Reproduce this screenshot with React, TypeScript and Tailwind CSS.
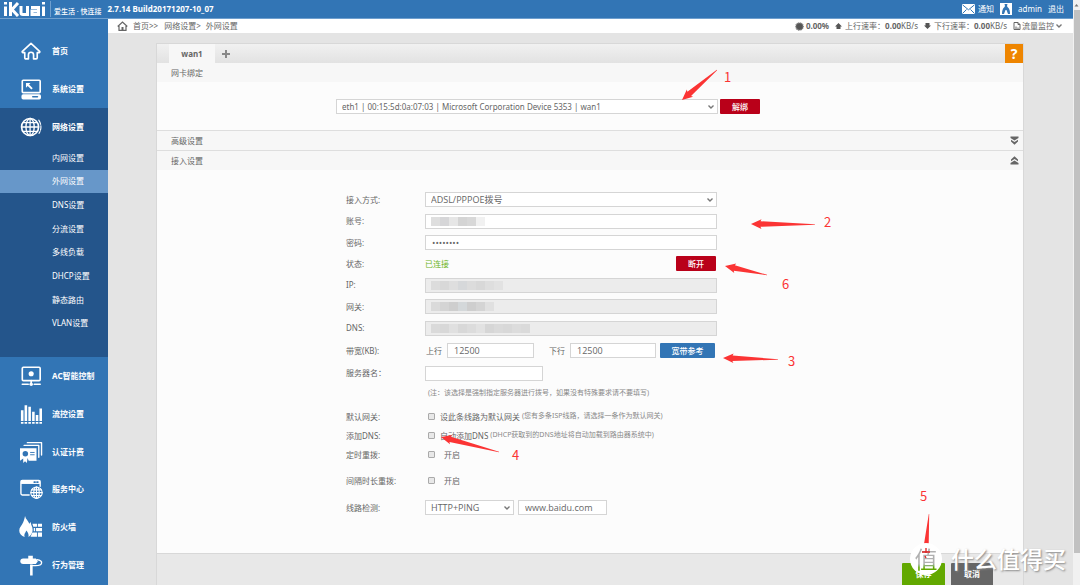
import React from "react";

type Child = { children: React.ReactNode };

/* ---------- icons ---------- */

function Svg({ children, className }: Child & { className: string }) {
  return (
    <svg viewBox="0 0 24 24" className={className} fill="none" stroke="currentColor" strokeWidth="1.8" strokeLinecap="round" strokeLinejoin="round" aria-hidden="true">
      {children}
    </svg>
  );
}

const icons = {
  home: (
    <path d="M2.6 12.4 12 3.6l9.400 8.800c.5.600.1 1.400-.6 1.400h-2v5.600c0 .8-.5 1.200-1.200 1.200h-2.800v-4.400a2.800 2.800 0 0 0-5.600 0v4.400H6.400c-.7 0-1.200-.4-1.200-1.200v-5.600h-2c-.7 0-1.100-.8-.6-1.400Z" />
  ),
  system: (
    <>
      <rect x="2.500" y="2.500" width="19.500" height="13.500" rx="1" />
      <path d="M6.500 5.500h5l-1.600 1.600 4 4-1.500 1.500-4-4-1.900 1.900Z" fill="currentColor" stroke="none" />
      <rect x="2.500" y="18.500" width="19.500" height="4" rx="1" fill="currentColor" />
      <path d="M14 20.500h5" stroke="#3275b5" />
    </>
  ),
  network: (
    <>
      <circle cx="11" cy="12" r="9.300" />
      <ellipse cx="11" cy="12" rx="4.500" ry="9.300" strokeWidth="1.500" />
      <path d="M11 2.700v18.600M1.700 12h18.600M3.200 7.300h15.600M3.200 16.700h15.600" strokeWidth="1.400" />
      <path d="M20.500 4.500c3 4.500 3.200 10 .2 14.500" strokeWidth="1.200" strokeDasharray="5 1.500" />
    </>
  ),
  ac: (
    <>
      <rect x="2.500" y="2.500" width="19.500" height="14.500" rx="1.200" />
      <circle cx="12.200" cy="9.500" r="2.800" fill="currentColor" stroke="none" />
      <path d="M12.200 17v2.500M2.500 21h6.500M15.500 21h6.500" />
      <circle cx="12.200" cy="21" r="1.900" fill="currentColor" stroke="none" />
    </>
  ),
  flow: (
    <g fill="currentColor" stroke="none">
      <path d="M1 8h2.800v11.500H1zM5 2.500h2.800v17H5zM9.100 4h2.800v15.500H9.100zM13.200 9.500H16v10h-2.800zM17.200 13H20v6.500h-2.800zM21.200 6H24v13.500h-2.800z" />
      <path d="M1 20.800h2.800v1.700H1zM5 20.800h2.800v1.700H5zM9.100 20.800h2.800v1.700H9.100zM13.200 20.800H16v1.700h-2.800zM17.200 20.800H20v1.700h-2.800zM21.200 20.800H24v1.700h-2.800z" />
    </g>
  ),
  auth: (
    <>
      <path d="M8 1.800h15.500v13.500M4.500 4.800h16v13" strokeWidth="1.500" />
      <path d="M0 8h18v13.500H9.500l-1.300-3-.7 5.500-2-2-2 2V19L0 21.500Z" fill="currentColor" stroke="none" />
      <circle cx="5.800" cy="14" r="3" fill="#3275b5" stroke="none" />
      <path d="M11.500 12.500h4M11.500 15h4" stroke="#3275b5" strokeWidth="1" />
    </>
  ),
  service: (
    <>
      <path d="M22 9V4.200c0-1-.5-1.500-1.500-1.500h-18C1.500 2.700 1 3.200 1 4.200V17c0 1 .5 1.500 1.500 1.500H10" strokeWidth="1.500" />
      <path d="M1 2.500h21v4H1z" fill="currentColor" stroke="none" />
      <path d="M15.500 4.500h1M18.500 4.500h1" stroke="#3275b5" />
      <g strokeWidth="1.200">
        <circle cx="18" cy="16" r="6.200" fill="#3275b5" />
        <ellipse cx="18" cy="16" rx="3" ry="6.200" />
        <path d="M18 9.800v12.400M11.800 16h12.400M12.800 12.900h10.400M12.800 19.100h10.400" />
      </g>
    </>
  ),
  fire: (
    <g fill="currentColor" stroke="none">
      <path d="M5.500 0c.5 3.500 4 5.600 4.700 8.500l1.600-2c-.2 3 2 5 2 8.500 0 3.200-1.500 6-4.500 7.800.5-3-.8-5.500-2.500-7-.5 2.500-2.800 3.500-1.700 7C1.500 21.500-.8 19-.8 16c0-3.300 2.100-5 3.300-7.200C4 6.200 4.800 3.500 5.500 0Z" />
      <path d="M13.500 8.500h5v3.200h-4zM19.500 8.500H24v3.200h-4.500zM15 13h1.500v3.500H15zM17.500 13H24v3.500h-6.500zM13.500 18h5v4.500h-7zM19.500 18H24v4.500h-4.500z" />
    </g>
  ),
  behavior: (
    <g>
      <path d="M3.500 5h13.800l2.200 3-2.200 3H3.500C-.8 11-.8 5 3.500 5Z" fill="currentColor" stroke="none" />
      <path d="M9 2h5v3.500H9zM11 11.500h2.800v12H11z" fill="currentColor" stroke="none" />
      <path d="M18.500 6.200c7 1 7 6.500-1.500 6.500h-5" strokeWidth="1.500" />
    </g>
  ),
};

type IconName = keyof typeof icons;

function Chevron({ className }: { className: string }) {
  return (
    <svg viewBox="0 0 8 6" className={className} fill="none" stroke="#777" strokeWidth="1.400" aria-hidden="true">
      <path d="m1.500 1.500 2.500 2.500 2.500-2.500" />
    </svg>
  );
}

/* ---------- navigation ---------- */

const topItems: { icon: IconName; label: string }[] = [
  { icon: "home", label: "首页" },
  { icon: "system", label: "系统设置" },
];
const subItems = ["内网设置", "外网设置", "DNS设置", "分流设置", "多线负载", "DHCP设置", "静态路由", "VLAN设置"];
const bottomItems: { icon: IconName; label: string }[] = [
  { icon: "ac", label: "AC智能控制" },
  { icon: "flow", label: "流控设置" },
  { icon: "auth", label: "认证计费" },
  { icon: "service", label: "服务中心" },
  { icon: "fire", label: "防火墙" },
  { icon: "behavior", label: "行为管理" },
];

function NavItem({ icon, label }: { icon: IconName; label: string }) {
  return (
    <a href="#" className="flex h-[38px] items-center gap-[10px] pl-5 text-[8px] font-bold whitespace-nowrap">
      <Svg className="size-[22px] shrink-0 overflow-visible">{icons[icon]}</Svg>
      {label}
    </a>
  );
}

function Sidebar() {
  return (
    <nav className="w-[108px] shrink-0 bg-[#3275b5] pt-[13px] text-white">
      {topItems.map((i) => <NavItem key={i.label} {...i} />)}
      <div className="bg-[#24558b] pb-[22px]">
        <NavItem icon="network" label="网络设置" />
        <div className="grid h-[189px] grid-rows-8">
          {subItems.map((s) => (
            <a key={s} href="#" className={s === "外网设置" ? "flex items-center bg-[#6797c9] pl-[52px] text-[8px]" : "flex items-center pl-[52px] text-[8px]"}>
              {s}
            </a>
          ))}
        </div>
      </div>
      <div className="grid h-[227px] grid-rows-6">
        {bottomItems.map((i) => <NavItem key={i.label} {...i} />)}
      </div>
    </nav>
  );
}

function Header() {
  return (
    <header className="flex h-[19px] items-center border-b border-[#6f9fce] bg-[#3275b5] text-[8px] text-white">
      <svg viewBox="0 0 44 16" className="ml-[3px] h-4 w-11 shrink-0" fill="none" stroke="currentColor" strokeWidth="3" role="img" aria-label="iKuai">
        <path d="M2.500 5.500V15M2.500 1v2.500M7.500 1v14M15 2l-6 6.500L15 15M18 5v6.500c0 1.500.6 2 2 2h4.500V5M28 6.500h7.500V15M35.500 10H29v3.500h6M40.500 5.500V15M40.500 1v2.500" />
      </svg>
      <span className="ml-[3px] border-l border-[#6f9fce] pt-[5px] pl-[3px] text-[7px] leading-[11px] font-medium whitespace-nowrap">爱生活 · 快连接</span>
      <span className="ml-[6px] font-bold whitespace-nowrap">2.7.14 Build20171207-10_07</span>
      <div className="ml-auto flex items-center gap-[6px] pr-[9px] whitespace-nowrap">
        <a href="#" className="flex items-center gap-[3px]">
          <svg viewBox="0 0 13 10" className="h-[10px] w-[13px]" aria-hidden="true">
            <path d="M0 0h13v10H0z" fill="#fff" />
            <path d="m.5.800 6 5 6-5M.5 9.500l4-4M12.500 9.500l-4-4" fill="none" stroke="#3275b5" strokeWidth="1" />
          </svg>
          通知
        </a>
        <a href="#" className="flex items-center gap-[6px]">
          <svg viewBox="0 0 12 12" className="size-3" aria-hidden="true">
            <path d="M0 0h12v12H0z" fill="#fff" />
            <path d="M4.500 1h3l-.5 2 .5 1c2 1.500 2.500 4 2.500 7H8L6.500 7h-1L4 11H2c0-3 .5-5.500 2.500-7L5 3Z" fill="#3275b5" />
          </svg>
          admin
        </a>
        <a href="#">退出</a>
      </div>
    </header>
  );
}

function Rate({ down, label }: { down?: boolean; label: string }) {
  return (
    <span className="flex items-center gap-[3px]">
      <svg viewBox="0 0 7 6" className="h-[6px] w-[7px]" fill="#555" aria-hidden="true">
        {down ? <path d="M1.500 0h4v2.500H7L3.500 6 0 2.500h1.500z" /> : <path d="M1.500 6h4V3.500H7L3.500 0 0 3.500h1.500z" />}
      </svg>
      <span>{label}<b>0.00</b>KB/s</span>
    </span>
  );
}

function StatusBar() {
  return (
    <div className="flex h-[14px] items-center bg-white pr-[10px] pl-[9px] text-[8px] whitespace-nowrap text-[#666]">
      <svg viewBox="0 0 11 10" className="mr-[5px] h-[10px] w-[11px]" fill="none" stroke="#666" strokeWidth="1.200" aria-hidden="true">
        <path d="M.7 5.500 5.500 1l4.800 4.500M2 5v4.300h7V5" />
        <path d="M4.500 6h2v3h-2z" fill="#666" stroke="none" />
      </svg>
      <a href="#">首页&gt;&gt;</a>
      <a href="#" className="ml-[6px]">网络设置&gt;</a>
      <span className="ml-[5px]">外网设置</span>
      <div className="ml-auto flex items-center gap-[6px]">
        <span className="flex items-center gap-[2px]">
          <svg viewBox="0 0 10 10" className="size-[9px]" aria-hidden="true">
            <circle cx="5" cy="5" r="4" fill="#555" stroke="#777" strokeWidth="1.600" strokeDasharray="1 .7" />
          </svg>
          <b>0.00%</b>
        </span>
        <Rate label="上行速率：" />
        <Rate down label="下行速率：" />
        <a href="#" className="flex items-center gap-px">
          <svg viewBox="0 0 8 8" className="size-2" fill="none" stroke="#666" aria-hidden="true">
            <path d="M1 .5h4l2 2v5H1zM5 .5v2h2M3 7V4.500M5 7V5.500" />
          </svg>
          流量监控
          <Chevron className="h-[6px] w-2" />
        </a>
      </div>
    </div>
  );
}

/* ---------- form ---------- */

function Row({ id, label, children, className }: Child & { id: string; label: string; className: string }) {
  return (
    <div className={`grid grid-cols-[79px_292px] items-center ${className}`}>
      <label htmlFor={id}>{label}</label>
      <div className="flex items-center">{children}</div>
    </div>
  );
}

const field = "h-[15px] min-w-0 border border-[#d5d5d5] px-[6px] font-['Open_Sans','Noto_Sans_CJK_SC',sans-serif] text-[9px] leading-[13px] text-[#666] outline-none";

function Select({ id, value, className, label, small }: { id: string; value: string; className: string; label?: string; small?: boolean }) {
  return (
    <span className={`relative flex ${className}`}>
      <select id={id} aria-label={label} className={`h-[15px] w-full appearance-none border border-[#d5d5d5] bg-white pl-[5px] leading-[13px] text-[#666] outline-none ${small ? "text-[8px]" : "font-['Open_Sans','Noto_Sans_CJK_SC',sans-serif] text-[9px]"}`}>
        <option>{value}</option>
      </select>
      <Chevron className="pointer-events-none absolute top-[5px] right-[3px] h-[6px] w-2" />
    </span>
  );
}

function Mosaic({ id, tiles, disabled }: { id: string; tiles: string[]; disabled?: boolean }) {
  return (
    <span className="relative flex w-full">
      <input id={id} type="text" disabled={disabled} className={`${field} w-full ${disabled ? "bg-[#ececec]" : "bg-white"}`} />
      <span className="pointer-events-none absolute top-[3px] left-[6px] flex">
        {tiles.map((t, i) => <span key={i} className={`h-[9px] w-[9px] ${t}`} />)}
      </span>
    </span>
  );
}

const box = "size-[7px] appearance-none rounded-[1px] border border-[#aaa] bg-[#e8e8e8]";
const redButton = "h-[15px] w-10 rounded-[1px] bg-[#b90019] text-[8px] leading-[15px] font-medium text-white";

function Check({ id, text, hint }: { id: string; text: string; hint?: string }) {
  return (
    <span className="flex items-center pl-[3px] whitespace-nowrap">
      <input id={id} type="checkbox" className={box} />
      <span className={hint ? "ml-[5px]" : "ml-[9px]"}>{text}</span>
      {hint && <span className="ml-[2px] text-[7px] text-[#888]">{hint}</span>}
    </span>
  );
}

function SectionTitle({ children, toggle }: Child & { toggle?: "down" | "up" }) {
  return (
    <div className="flex h-[19px] items-center justify-between bg-[#f7f7f7] pr-1 pl-[14px]">
      <h2>{children}</h2>
      {toggle && (
        <button type="button" aria-label={toggle === "down" ? "展开" : "收起"}>
          <svg viewBox="0 0 9 9" className={toggle === "up" ? "size-[9px] rotate-180" : "size-[9px]"} aria-hidden="true">
            <path d="M.5.500h8v1.500L4.500 4.500.5 2ZM1 3.700l3.500 2.200L8 3.700v1.800L4.500 8.700 1 5.500Z" fill="#666" />
          </svg>
        </button>
      )}
    </div>
  );
}

function WanForm() {
  return (
    <form className="px-[189px] pt-[19px]">
      <div className="grid h-[150px] grid-rows-7">
        <Row id="mode" label="接入方式:" className=""><Select id="mode" value="ADSL/PPPOE拨号" className="w-full" /></Row>
        <Row id="account" label="账号:" className=""><Mosaic id="account" tiles={["bg-[#dedede]", "bg-[#d6d6d8]", "bg-[#e6e6e6]", "bg-[#d4d4d4]", "bg-[#d8d8d8]", "bg-[#f1f1f1]"]} /></Row>
        <Row id="password" label="密码:" className=""><input id="password" type="password" defaultValue="abcdefgh" className={`${field} w-full bg-white`} /></Row>
        <Row id="disconnect" label="状态:" className="">
          <span className="text-[#6cb41f]">已连接</span>
          <button id="disconnect" type="button" className={`${redButton} mr-px ml-auto`}>断开</button>
        </Row>
        <Row id="ip" label="IP:" className=""><Mosaic id="ip" disabled tiles={["bg-[#dcdcdc]", "bg-[#d8d8d8]", "bg-[#dedede]", "bg-[#d6d8da]", "bg-[#dcdcdc]", "bg-[#d8d8d8]", "bg-[#dedede]", "bg-[#e2e2e2]"]} /></Row>
        <Row id="gateway" label="网关:" className=""><Mosaic id="gateway" disabled tiles={["bg-[#dadada]", "bg-[#d4d4d4]", "bg-[#cecece]", "bg-[#d4d8da]", "bg-[#cecece]", "bg-[#d4d4d4]", "bg-[#e0e0e0]"]} /></Row>
        <Row id="dns" label="DNS:" className=""><Mosaic id="dns" disabled tiles={["bg-[#dadada]", "bg-[#d8d8d8]", "bg-[#e0e0e0]", "bg-[#d8d8d8]", "bg-[#dcdcdc]", "bg-[#e2e2e2]", "bg-[#d6d6d6]", "bg-[#dadada]", "bg-[#d8d8d8]", "bg-[#dcdcdc]", "bg-[#dadada]"]} /></Row>
      </div>
      <Row id="up" label="带宽(KB):" className="h-[23px]">
        <span className="w-[22px] pl-px whitespace-nowrap">上行</span>
        <input id="up" type="text" defaultValue="12500" className={`${field} w-[87px] bg-white`} />
        <label htmlFor="down" className="ml-[15px] w-[21px] whitespace-nowrap">下行</label>
        <input id="down" type="text" defaultValue="12500" className={`${field} w-[86px] bg-white`} />
        <button type="button" className="ml-1 h-[15px] w-[55px] rounded-[1px] bg-[#3275b5] text-[8px] leading-[15px] font-medium text-white">宽带参考</button>
      </Row>
      <Row id="server" label="服务器名：" className="h-[22px]"><input id="server" type="text" className={`${field} w-[118px] bg-white`} /></Row>
      <p className="pt-[2px] pb-[7px] pl-[82px] text-[7px] leading-[14px] whitespace-nowrap text-[#888]">(注：该选择是强制指定服务器进行拨号，如果没有特殊要求请不要填写)</p>
      <Row id="defgw" label="默认网关:" className="h-[19px]"><Check id="defgw" text="设此条线路为默认网关" hint="(您有多条ISP线路，请选择一条作为默认网关)" /></Row>
      <Row id="adddns" label="添加DNS:" className="h-[19px]"><Check id="adddns" text="自动添加DNS" hint="(DHCP获取到的DNS地址将自动加载到路由器系统中)" /></Row>
      <Row id="timed" label="定时重拨:" className="mb-[7px] h-[19px]"><Check id="timed" text="开启" /></Row>
      <Row id="interval" label="间隔时长重拨:" className="mb-[8px] h-[19px]"><Check id="interval" text="开启" /></Row>
      <Row id="detect" label="线路检测:" className="h-[19px]">
        <Select id="detect" value="HTTP+PING" className="w-[89px]" />
        <input type="text" aria-label="检测地址" defaultValue="www.baidu.com" className={`${field} ml-1 w-[89px] bg-white`} />
      </Row>
    </form>
  );
}

function Panel() {
  return (
    <main className="mt-[10px] mr-[49px] ml-12 flex grow flex-col border-x border-t border-[#d8d8d8] bg-[#fcfcfc]">
      <div className="flex h-[19px] items-stretch bg-linear-to-b from-[#f1f1f1] to-[#e2e2e2] text-[8px]">
        <button type="button" className="ml-3 w-[46px] bg-[#f7f7f7] font-bold">wan1</button>
        <button type="button" aria-label="添加" className="px-[7px]">
          <svg viewBox="0 0 8 8" className="size-2" aria-hidden="true"><path d="M3 0h2v3h3v2H5v3H3V5H0V3h3z" fill="#888" /></svg>
        </button>
        <button type="button" aria-label="帮助" className="ml-auto w-[18px] bg-[#ee8500] text-[14px] leading-[19px] font-bold text-white">?</button>
      </div>
      <SectionTitle>网卡绑定</SectionTitle>
      <div className="flex h-[49px] items-center border-b border-[#dedede] pl-[179px]">
        <Select id="nic" label="网卡" small value="eth1 | 00:15:5d:0a:07:03 | Microsoft Corporation Device 5353 | wan1" className="w-[382px]" />
        <button type="button" className={`${redButton} ml-[2px]`}>解绑</button>
      </div>
      <SectionTitle toggle="down">高级设置</SectionTitle>
      <div className="border-t border-[#dedede]"><SectionTitle toggle="up">接入设置</SectionTitle></div>
      <WanForm />
      <footer className="mt-auto flex h-8 items-end justify-end gap-[6px] border-t border-[#d8d8d8] bg-[#e8e8e8] pr-[30px] text-[8px] font-bold text-white">
        <button type="button" className="h-[22px] w-[43px] rounded-t-[1px] bg-[#62a800]">保存</button>
        <button type="button" className="h-[22px] w-[42px] rounded-t-[1px] bg-[#666]">取消</button>
      </footer>
    </main>
  );
}

/* ---------- annotations ---------- */

type Mark = { tip: [number, number]; tail: [number, number] };
const marks: Mark[] = [
  { tip: [682, 100], tail: [717, 70] },
  { tip: [751, 224], tail: [815, 224.5] },
  { tip: [723, 358], tail: [778, 359.5] },
  { tip: [441, 437], tail: [499, 452] },
  { tip: [925, 560], tail: [929, 514] },
  { tip: [725, 266], tail: [767, 275] },
];

function arrowPoints({ tip, tail }: Mark) {
  const dx = tail[0] - tip[0];
  const dy = tail[1] - tip[1];
  const len = Math.hypot(dx, dy);
  const at = (along: number, side: number) =>
    `${tip[0] + (dx * along - dy * side) / len},${tip[1] + (dy * along + dx * side) / len}`;
  return [at(0, 0), at(10.5, 4.8), at(9.5, 2.8), at(len, 0.2), at(len, -0.2), at(9.5, -2.8), at(10.5, -4.8)].join(" ");
}

function Annotations() {
  const num = "absolute text-[13px] leading-[14px] font-['Noto_Sans_CJK_SC',sans-serif]";
  return (
    <div className="pointer-events-none absolute inset-0 overflow-hidden text-[#fb3434]">
      <svg className="absolute top-0 left-0" width="1080" height="585" fill="#fb3434" aria-hidden="true">
        {marks.map((m, i) => <polygon key={i} points={arrowPoints(m)} />)}
      </svg>
      <span className={`${num} top-[70px] left-[724px]`}>1</span>
      <span className={`${num} top-[215px] left-[824px]`}>2</span>
      <span className={`${num} top-[354px] left-[788px]`}>3</span>
      <span className={`${num} top-[448px] left-[512px]`}>4</span>
      <span className={`${num} top-[489px] left-[920px]`}>5</span>
      <span className={`${num} top-[277px] left-[782px]`}>6</span>
      <div className="absolute top-[543px] left-[910px] flex items-center gap-[9px] whitespace-nowrap">
        <span className="relative flex size-8 items-center justify-center rounded-full bg-white">
          <span className="bg-linear-to-b from-[#b0b0b0] from-65% to-[#62a800] to-75% bg-clip-text text-[23px] leading-8 text-transparent">值</span>
          <svg viewBox="0 0 10 14" className="absolute top-1 left-[11px] h-[14px] w-[10px]" fill="none" stroke="#d22" strokeWidth="1.300" aria-hidden="true">
            <path d="M5 1v5M1 5h8M4 9l1 2" />
          </svg>
        </span>
        <span className="text-[23px] leading-[30px] font-medium text-white [text-shadow:1px_1px_2px_#888]">什么值得买</span>
      </div>
    </div>
  );
}

export default function App() {
  return (
    <div className="relative flex min-h-screen bg-[#e4e4e4] font-['Noto_Sans','Noto_Sans_CJK_SC',sans-serif] text-[8px] text-[#666]">
      <div className="flex grow flex-col">
        <Header />
        <div className="flex grow">
          <Sidebar />
          <div className="flex grow flex-col">
            <StatusBar />
            <Panel />
          </div>
        </div>
      </div>
      <div className="flex w-[7px] shrink-0 flex-col items-center bg-[#f1f1f1] pb-8" aria-hidden="true">
        <svg viewBox="0 0 7 10" className="h-[10px] w-[7px]"><path d="M1.500 6.500 3.500 4l2 2.500z" fill="#777" /></svg>
        <div className="w-[6px] grow bg-[#c1c1c1]" />
      </div>
      <Annotations />
    </div>
  );
}
